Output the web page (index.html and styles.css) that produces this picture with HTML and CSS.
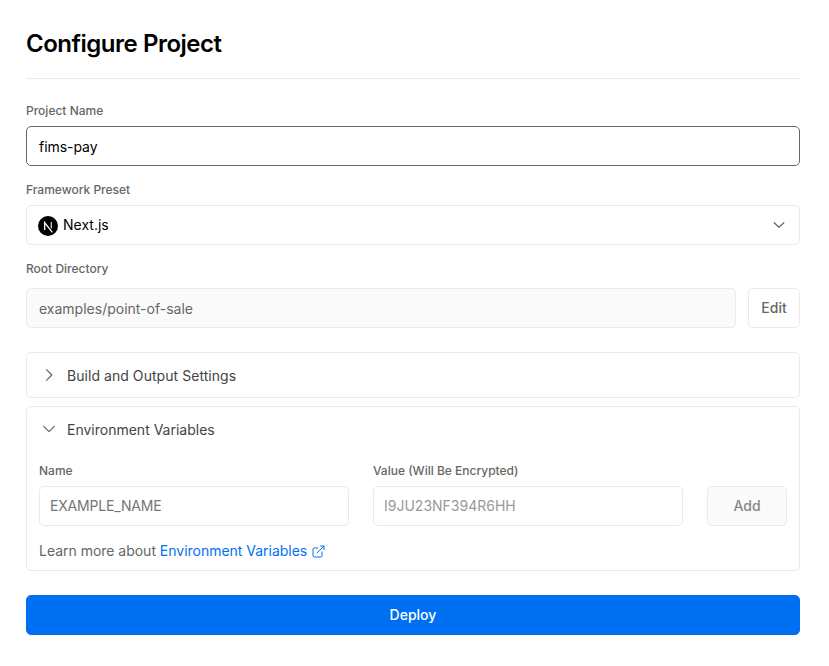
FILE: index.html
```html
<!DOCTYPE html>
<html lang="en">
<head>
<meta charset="utf-8">
<title>Configure Project</title>
<link rel="stylesheet" href="styles.css">
</head>
<body>
<main class="page">
  <h1 class="title">Configure Project</h1>
  <label class="label label-first">Project Name</label>
  <div class="field field-active">fims-pay</div>
  <label class="label">Framework Preset</label>
  <div class="field select">
    <svg class="logo" width="20" height="20" viewBox="0 0 20 20"><circle cx="10" cy="10" r="10" fill="#000"/><path d="M6.700 14V6.700L14.300 16.300" fill="none" stroke="#fff" stroke-width="1.300"/><path d="M13.300 6v6.500" stroke="#ddd" stroke-width="1.200"/></svg>
    <span class="select-text">Next.js</span>
    <svg class="icon" width="20" height="20" viewBox="0 0 20 20"><path d="M5.200 7.700l4.800 4.600 4.800-4.600"/></svg>
  </div>
  <label class="label">Root Directory</label>
  <div class="row root">
    <div class="field disabled grow">examples/point-of-sale</div>
    <button class="btn edit">Edit</button>
  </div>
  <section class="panel closed">
    <div class="head"><svg class="icon" width="20" height="20" viewBox="0 0 20 20"><path d="M7.500 4.700l5.300 5.300-5.300 5.300"/></svg><span class="build-text">Build and Output Settings</span></div>
  </section>
  <section class="panel open">
    <div class="head"><svg class="icon" width="20" height="20" viewBox="0 0 20 20"><path d="M4.700 7.300l5.300 5.300 5.300-5.300"/></svg><span>Environment Variables</span></div>
    <div class="vars">
      <div class="var"><label class="label">Name</label><div class="field name">EXAMPLE_NAME</div></div>
      <div class="var"><label class="label">Value (Will Be Encrypted)</label><div class="field value">I9JU23NF394R6HH</div></div>
      <button class="btn add">Add</button>
    </div>
    <p class="learn">Learn more about <a class="link">Environment Variables <svg class="external" width="13" height="13" viewBox="0 0 13 13"><path d="M10 7v3.800a1.200 1.200 0 0 1-1.200 1.200H2.200A1.200 1.200 0 0 1 1 10.800V4.200A1.200 1.200 0 0 1 2.200 3H6M8.500 1H12v3.500M5 8l7-7"/></svg></a></p>
  </section>
  <button class="btn deploy">Deploy</button>
</main>
</body>
</html>
```
FILE: styles.css
```css
* { box-sizing: border-box; }
body { margin: 0; background: #fff; font-family: Inter, sans-serif; font-size: 14px; color: #000; }
.page { width: 829px; padding: 26px 29px 0 26px; }
.title { margin: 0 0 24px; height: 53px; border-bottom: 1px solid #eaeaea; font-size: 24px; line-height: 36px; font-weight: 600; letter-spacing: -.48px; }
.label { display: block; height: 16px; margin: 16px 0 0; font-size: 12px; line-height: 16px; font-weight: 500; color: #666; }
.label-first { margin-top: 0; }
.field { display: flex; align-items: center; height: 40px; margin-top: 7px; padding: 0 12px; border: 1px solid #eaeaea; border-radius: 5px; }
.field-active { border-color: #666; letter-spacing: -.05px; }
.select { padding: 0 10px 0 11px; }
.select-text { flex: 1; margin: -1px 0 0 5px; }
.logo { margin-top: 2px; }
.icon { fill: none; stroke: #666; stroke-width: 1.2; stroke-linecap: round; stroke-linejoin: round; }
.row { display: flex; gap: 12px; }
.root { margin-top: 11px; }
.root .field { margin: 0; }
.grow { flex: 1; }
.disabled { background: #fafafa; color: #666; }
.btn { height: 40px; padding: 0; border: 1px solid #eaeaea; border-radius: 5px; background: #fff; color: #666; font: 500 14px Inter, sans-serif; }
.edit { width: 52px; padding-bottom: 1px; }
.panel { border: 1px solid #eaeaea; border-radius: 5px; padding: 0 12px; }
.closed { height: 46px; margin-top: 24px; }
.open { height: 165px; margin-top: 8px; }
.head { display: flex; align-items: center; height: 44px; color: #444; }
.head span { margin: 0 0 0 8px; }
.build-text { letter-spacing: .05px; }
.vars { display: flex; gap: 24px; align-items: flex-end; margin-top: 12px; }
.var { flex: 1; }
.var .label { margin: 0; }
.var .field { padding: 0 10px 1px; color: #757575; }
.var .name { letter-spacing: -.18px; }
.var .value { color: #999; }
.add { width: 80px; padding-bottom: 1px; background: #fafafa; color: #888; }
.learn { margin: 15px 0 0; line-height: 20px; color: #666; letter-spacing: -.02px; }
.link { color: #0070f3; }
.external { margin-left: 1px; vertical-align: -2px; fill: none; stroke: currentColor; stroke-width: 1; stroke-linecap: round; stroke-linejoin: round; }
.deploy { display: block; width: 100%; margin-top: 24px; padding-bottom: 1px; border-color: #0070f3; background: #0070f3; color: #fff; }
```
